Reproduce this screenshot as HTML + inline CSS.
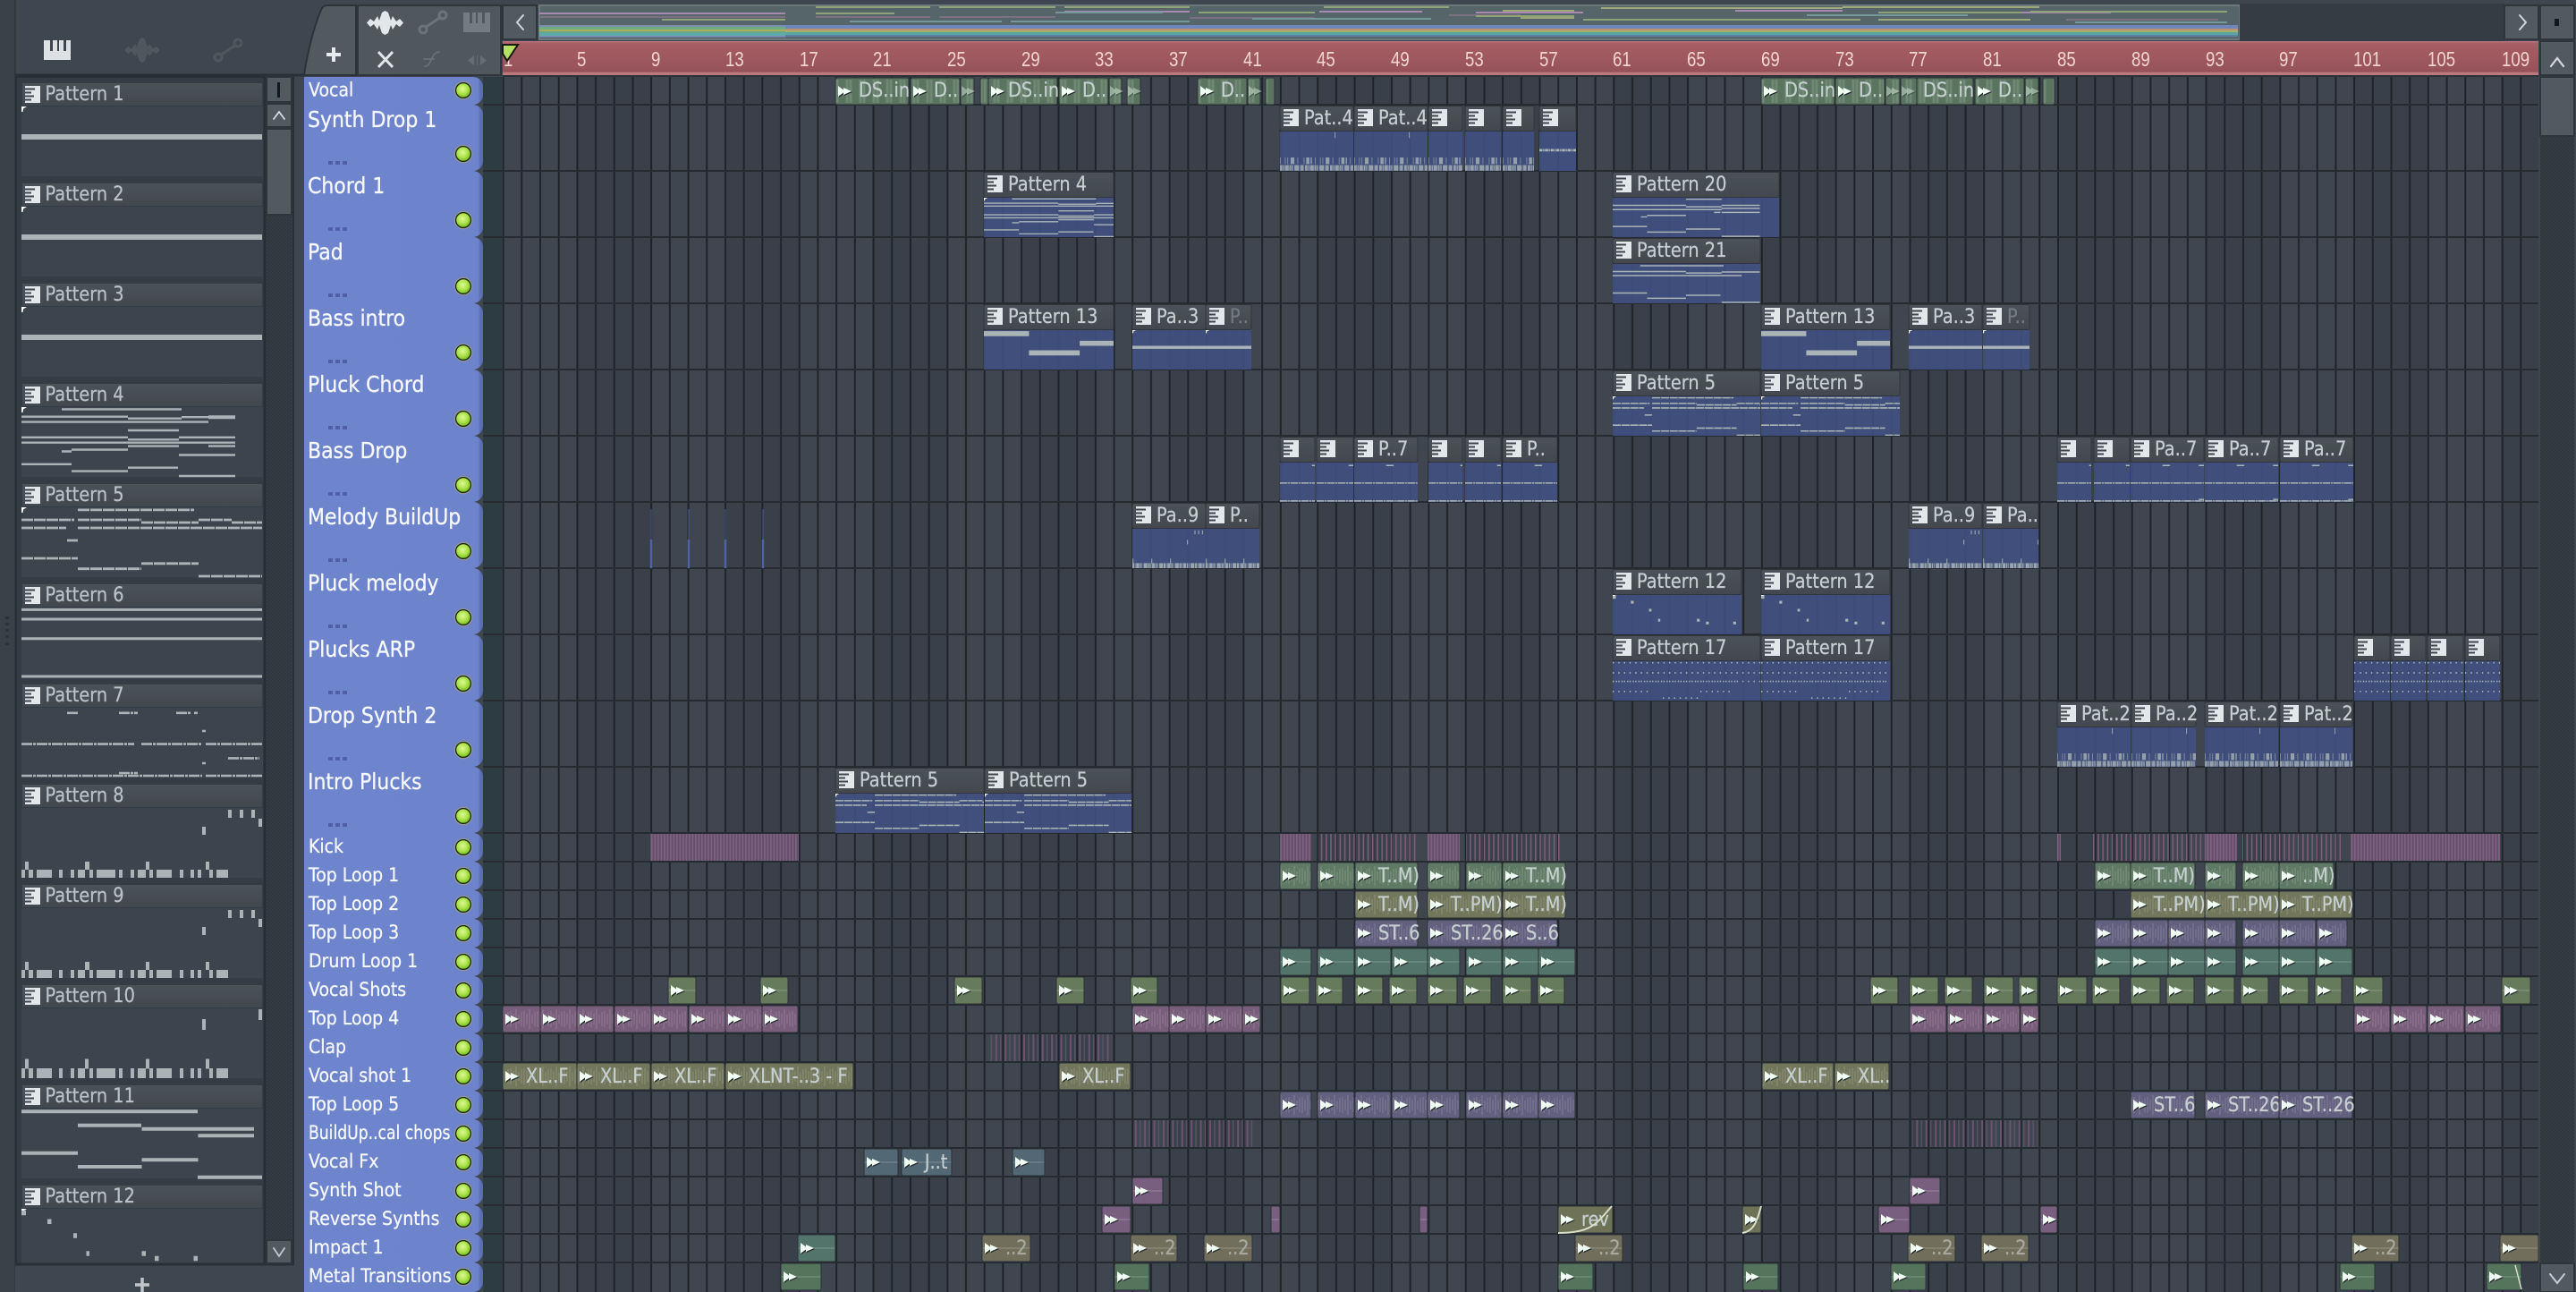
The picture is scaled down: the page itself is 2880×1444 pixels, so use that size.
<!DOCTYPE html>
<html><head><meta charset="utf-8"><title>Playlist</title>
<style>
html,body{margin:0;padding:0;background:#3e474f;overflow:hidden;width:2880px;height:1444px}
svg{display:block}
text{font-family:"DejaVu Sans",sans-serif;white-space:pre}
.ct,.tt,.ts,.lt{transform:scaleX(.88);transform-box:fill-box;transform-origin:0 50%}
.ct{font-size:22px;fill:#c6cfd0;stroke:#c6cfd0;stroke-width:.25px}
.lt{font-size:22px;fill:#b9c3c7;stroke:#b9c3c7;stroke-width:.25px}
.dm{fill:#737b80;stroke:#737b80}
.tt{font-size:25px;fill:#f6f8ff;stroke:#f6f8ff;stroke-width:.35px}
.ts{font-size:21.5px;fill:#f6f8ff;stroke:#f6f8ff;stroke-width:.3px}
.rl{font-family:"Liberation Sans",sans-serif;font-size:23px;fill:#f3d5d0;transform:scaleX(.81);transform-box:fill-box;transform-origin:0 50%}
.c{y:1px;height:30px;rx:2px;stroke:#2c3238;stroke-width:1}
.k{y:1px;height:30px}
.h{y:1.5px;height:28px;rx:2px;fill:url(#hg);stroke:#30363c;stroke-width:1}
.lh{x:25px;y:0;width:268px;height:25px;fill:url(#hg)}
.th{x:24px;y:26px;width:270px;height:78px;fill:#3c454e}
.b{width:500px;height:44px;fill:#40507f;opacity:.9}
.tk{x:320px;width:220px;rx:11px;fill:url(#tg)}
.btn{fill:#525a61;stroke:#2e353b;stroke-width:2}
.ic{fill:none;stroke-linecap:round}
.n{fill:none;stroke:#aab4b7}
</style></head><body>
<svg width="2880" height="1444" viewBox="0 0 2880 1444" xmlns="http://www.w3.org/2000/svg">
<defs>
<linearGradient id="hg" x1="0" y1="0" x2="0" y2="1"><stop offset="0" stop-color="#4b5259"/><stop offset="1" stop-color="#42484e"/></linearGradient>
<linearGradient id="tg" x1="0" y1="0" x2="1" y2="0"><stop offset="0" stop-color="#6e84cc"/><stop offset=".975" stop-color="#6d83cb"/><stop offset=".985" stop-color="#5d70b5"/><stop offset="1" stop-color="#5a6cb0"/></linearGradient>
<linearGradient id="rg" x1="0" y1="0" x2="0" y2="1"><stop offset="0" stop-color="#bb7a7e"/><stop offset=".07" stop-color="#a75e64"/><stop offset=".9" stop-color="#96525a"/><stop offset=".93" stop-color="#bd7c80"/><stop offset="1" stop-color="#b97478"/></linearGradient>
<radialGradient id="lg" cx=".45" cy=".4" r=".65"><stop offset="0" stop-color="#dcfa95"/><stop offset=".6" stop-color="#a8e045"/><stop offset="1" stop-color="#72b21e"/></radialGradient>
<pattern id="gr" x="561.6" y="0" width="165.56" height="32" patternUnits="userSpaceOnUse"><rect width="82.78" height="32" fill="#3f464f"/><rect x="82.78" width="82.78" height="32" fill="#39404a"/><path d="M1 0V32M21.7 0V32M42.4 0V32M63.1 0V32M83.8 0V32M104.5 0V32M125.2 0V32M145.9 0V32" stroke="#1e2329" stroke-width="2"/></pattern>
<pattern id="ht" width="4" height="4" patternUnits="userSpaceOnUse"><rect width="4" height="4" fill="#353c43"/><path d="M0 4L4 0" stroke="#2e353b"/></pattern>
<path id="wv" d="M1 7V25M4 10V22M7 5V27M10 11V21M13 8V24" stroke="#fff" stroke-opacity=".11" stroke-width="1.6"/>
<path id="wl" d="M0 16H15" stroke="#fff" stroke-opacity=".2" stroke-width="1.2"/>
<pattern id="pg" width="15" height="32" patternUnits="userSpaceOnUse"><rect width="15" height="32" fill="#5f7a64"/><use href="#wv"/></pattern>
<pattern id="pv" width="15" height="32" patternUnits="userSpaceOnUse"><rect width="15" height="32" fill="#5b7460"/><path d="M2 3V29M6 3V29" stroke="#6e8873" stroke-width="3"/></pattern>
<pattern id="po" width="15" height="32" patternUnits="userSpaceOnUse"><rect width="15" height="32" fill="#72775c"/><use href="#wv"/></pattern>
<pattern id="pp" width="15" height="32" patternUnits="userSpaceOnUse"><rect width="15" height="32" fill="#635f7e"/><use href="#wv"/></pattern>
<pattern id="pm" width="15" height="32" patternUnits="userSpaceOnUse"><rect width="15" height="32" fill="#785e7a"/><use href="#wv"/></pattern>
<pattern id="te" width="15" height="32" patternUnits="userSpaceOnUse"><rect width="15" height="32" fill="#52746a"/><use href="#wl"/></pattern>
<pattern id="vg" width="15" height="32" patternUnits="userSpaceOnUse"><rect width="15" height="32" fill="#667a5c"/><use href="#wl"/></pattern>
<pattern id="vb" width="15" height="32" patternUnits="userSpaceOnUse"><rect width="15" height="32" fill="#526874"/><use href="#wl"/></pattern>
<pattern id="br" width="15" height="32" patternUnits="userSpaceOnUse"><rect width="15" height="32" fill="#726e5c"/><use href="#wl"/></pattern>
<pattern id="mg" width="15" height="32" patternUnits="userSpaceOnUse"><rect width="15" height="32" fill="#54745c"/><use href="#wl"/></pattern>
<pattern id="ms" width="15" height="32" patternUnits="userSpaceOnUse"><rect width="15" height="32" fill="#785f80"/><use href="#wl"/></pattern>
<pattern id="kd" width="3.5" height="32" patternUnits="userSpaceOnUse"><rect width="3.5" height="32" fill="#62506a"/><rect width="1.7" height="32" fill="#7e6080"/></pattern>
<pattern id="ks" width="5.2" height="32" patternUnits="userSpaceOnUse"><rect width="1.6" height="32" fill="#7d5c7a"/></pattern>
<pattern id="cs" width="10.4" height="32" patternUnits="userSpaceOnUse"><rect width="2" height="32" fill="#6d5170"/><rect x="5.2" width="1.4" height="32" fill="#5a5568"/></pattern>
<g id="a"><path d="M4 11L10 15.5V13L19 17L10 21V18.5L4 23Z" fill="#23282c"/><path d="M3 10L9 14.5V12L18 16L9 20V17.5L3 22Z" fill="#f2fff4"/></g>
<g id="pi"><rect width="17" height="19" fill="#e2e7ea"/><path d="M0 3.500h11M0 7.500h7M0 11.500h10M0 15.500h7" stroke="#3f474e" stroke-width="2"/></g>
<g id="l"><circle cx="518" r="10.4" fill="#8d949a"/><circle cx="518" r="9" fill="#15240a"/><circle cx="518" r="7.800" fill="url(#lg)"/></g>
<path id="mk" d="M0 0h6L2 2.5 1.5 6H0z" fill="#fff"/>
<path id="dt" d="M367 0h5v4h-5zM375 0h5v4h-5zM383 0h5v4h-5z" fill="#4f60a8"/>
<g id="p1"><use href="#mk"/><path class="n" stroke-width="6" d="M0 34H269"/></g>
<g id="p4"><use href="#mk"/><path class="n" stroke-width="2.4" d="M45 2.4h134M0 10.7h119M0 16.6h209M119 12.7h60M179 11.2h30M0 33.8h119M176 33.8h63M119 26h57M119 36.3h57M0 39.7h239M119 43.6h57M209 43.6h30M56 47.6h63M45 49.5h11M176 53.5h63M0 63.8h56M119 67.7h56M56 71.6h63M176 77h63"/><path class="n" stroke-width="4" d="M209 11.2h30"/></g>
<g id="p20"><path class="n" stroke-width="2.6" d="M117 3h57M0 15h117M117 18h57M174 15h61M0 23.5h174M174 21h61M162 29h10M174 29h61M55 35h62M45 38h10M0 57h55M117 62h55M55 68h62M174 76.5h61"/></g>
<g id="p21"><path class="n" stroke-width="2.6" d="M44 3.6h133M0 15h117M117 18h57M174 16h61M0 23h206M0 57.6h55M117 62h55M55 68h62M174 76h61"/></g>
<g id="p5"><use href="#mk"/><path class="n" stroke-width="2.8" stroke-dasharray="13 1" d="M63 2.9h130M0 14h59M63 14h71M198 14h37M134 17h64M235 17h34M0 23h50M63 23h206M51 37h12M0 57h63M134 62.8h64M63 68.7h71M198 77h71"/></g>
<g id="p6"><path class="n" stroke-width="3" d="M0 2.4H269M0 13H269M0 34.8H269M0 77H269"/></g>
<g id="p7"><path class="n" stroke-width="2.6" stroke-dasharray="12 1 3 1" d="M51 5.8h12M109 5.8h21M173 5.8h16M193 5.8h4M202 26h4M0 40.6h126M134 40.6h68M206 40.6h63M231 56.4h35M202 62h4M109 73h21M0 76h202M206 76h63"/></g>
<g id="p8"><path class="n" stroke-width="9" d="M0 73.5h4M8 73.5h5M17 73.5h17M42 73.5h4M55 73.5h4M63 73.5h8M76 73.5h4M84 73.5h21M109 73.5h4M122 73.5h4M130 73.5h9M143 73.5h4M151 73.5h17M177 73.5h4M189 73.5h4M197 73.5h4M210 73.5h4M218 73.5h13M4 64.5h4M71 64.5h5M139 64.5h4M206 64.5h4M231 6.5h4M244 6.5h4M257 6.5h4M265 16.5h4M202 25.5h4"/></g>
<g id="p10"><path class="n" stroke-width="11" d="M0 72.5h4M8 72.5h5M17 72.5h17M42 72.5h4M55 72.5h4M63 72.5h8M76 72.5h4M84 72.5h21M109 72.5h4M122 72.5h4M130 72.5h9M143 72.5h4M151 72.5h17M177 72.5h4M189 72.5h4M197 72.5h4M210 72.5h4M218 72.5h13M4 62h4M71 62h4M139 62h4M206 62h4"/><path class="n" stroke-width="4" d="M267 1V13M204 12V24"/></g>
<g id="p11"><path class="n" stroke-width="4" d="M0 3.3h197M63 18.7h71M134.500 22.700h63M197.400 22.700h62.600M197.400 30.300h62.600M0 49.700h63M134.500 57.300h63M63 65h71.500M197 76.700h72"/></g>
<g id="p12"><use href="#mk"/><path class="n" stroke-width="5.500" d="M0 4.500h5M29 14.300h4.500M58 30h4M72.500 50h3.500M134.500 50h4.500M149 55.500h4.500M192.500 55.500h4.500M225 64h33M210 73h14"/></g>
<g id="p13"><path class="n" stroke-width="10" d="M0 7H72M72 45H153M153 26H226M226 73H269"/></g>
<g id="p14" opacity=".8"><path class="n" stroke-width="11" stroke-dasharray="4 1 2 1 6 1 3 1 2 2 7 1 1 1 5 2" d="M0 72H500"/><path class="n" stroke-width="13" stroke-dasharray="1 7 1 3 1 4 6 5 1 9 1 3 5 2 2 5" d="M0 58H500"/><path class="n" stroke-width="1.500" d="M88 1V13M206 1V13"/></g>
<g id="p15"><path class="n" stroke-width="5" stroke-dasharray="5 1 2 1" d="M0 37H60M85 71H95"/></g>
<g id="p9" opacity=".85"><path class="n" stroke-width="10" stroke-dasharray="3 1 1 1 5 1 2 1 1 2 6 1" d="M0 73H500"/><path class="n" stroke-width="1.600" d="M1 59V69M31 59V69M61 59V69M88 22V31M100 3V11M106 3V11M112 3V11M118 8V18M121 59V69M151 59V69M181 59V69"/></g>
<g id="p17"><path class="n" stroke-width="3" stroke-dasharray="2 7" d="M0 3H500M0 23H500M0 40H500M0 60H60M80 73H140M140 60H190M5 40H200"/></g>
<g id="B1"><rect class="b"/><use href="#p1" transform="scale(.7 .564)"/></g>
<g id="B4"><rect class="b"/><use href="#p4" transform="scale(.7 .564)"/></g>
<g id="B5"><rect class="b"/><use href="#p5" transform="scale(.7 .564)"/></g>
<g id="B7"><rect class="b"/><use href="#p7" transform="scale(.7 .564)"/></g>
<g id="B9"><rect class="b"/><use href="#p9" transform="scale(.7 .564)"/></g>
<g id="B12"><rect class="b"/><use href="#p12" transform="scale(.7 .564)"/></g>
<g id="B13"><rect class="b"/><use href="#p13" transform="scale(.7 .564)"/></g>
<g id="B14"><rect class="b"/><use href="#p14" transform="scale(.7 .564)"/></g>
<g id="B15"><rect class="b"/><use href="#p15" transform="scale(.7 .564)"/></g>
<g id="B17"><rect class="b"/><use href="#p17" transform="scale(.7 .564)"/></g>
<g id="B20"><rect class="b"/><use href="#p20" transform="scale(.7 .564)"/></g>
<g id="B21"><rect class="b"/><use href="#p21" transform="scale(.7 .564)"/></g>
</defs>

<rect width="2880" height="1444" fill="#3e474f"/>
<rect x="0" width="17" height="1444" fill="#3a4249"/>
<path d="M17 0V1444" stroke="#2e363d" stroke-width="1.500"/>
<path d="M6 689h4v3h-4zM6 696h4v3h-4zM6 703h4v3h-4zM6 710h4v3h-4zM6 718h4v3h-4z" fill="#2c3339"/>

<!-- grid -->
<rect x="562" y="86" width="2276" height="1358" fill="url(#gr)"/>
<rect x="540" y="86" width="22" height="1358" fill="#2d3b43"/>
<path d="M540 117H2838M540 191H2838M540 265H2838M540 339H2838M540 413H2838M540 487H2838M540 561H2838M540 635H2838M540 709H2838M540 783H2838M540 857H2838M540 931H2838M540 963H2838M540 995H2838M540 1027H2838M540 1059H2838M540 1091H2838M540 1123H2838M540 1155H2838M540 1187H2838M540 1219H2838M540 1251H2838M540 1283H2838M540 1315H2838M540 1347H2838M540 1379H2838M540 1411H2838" stroke="#262b32" stroke-width="2"/>

<!-- row 0 vocal -->
<g transform="translate(0 86)" fill="url(#pv)">
<rect class="c" x="934" width="82"/><use href="#a" x="934"/><text class="ct" x="960" y="22">DS..in</text>
<rect class="c" x="1018" width="55"/><use href="#a" x="1018"/><text class="ct" x="1044" y="22">D..</text>
<rect class="c" x="1074" width="15"/><use href="#a" x="1072" opacity=".4"/>
<rect class="c" x="1096" width="9"/>
<rect class="c" x="1105" width="77"/><use href="#a" x="1105"/><text class="ct" x="1127" y="22">DS..in</text>
<rect class="c" x="1184" width="55"/><use href="#a" x="1184"/><text class="ct" x="1210" y="22">D..</text>
<rect class="c" x="1240" width="14"/><use href="#a" x="1238" opacity=".4"/>
<rect class="c" x="1260" width="15"/><use href="#a" x="1258" opacity=".4"/>
<rect class="c" x="1339" width="55"/><use href="#a" x="1339"/><text class="ct" x="1365" y="22">D..</text>
<rect class="c" x="1395" width="14"/><use href="#a" x="1393" opacity=".4"/>
<rect class="c" x="1415" width="10"/>
<rect class="c" x="1969" width="82"/><use href="#a" x="1969"/><text class="ct" x="1995" y="22">DS..in</text>
<rect class="c" x="2052" width="55"/><use href="#a" x="2052"/><text class="ct" x="2078" y="22">D..</text>
<rect class="c" x="2108" width="16"/><use href="#a" x="2106" opacity=".4"/>
<rect class="c" x="2125" width="18"/><use href="#a" x="2123" opacity=".4"/>
<rect class="c" x="2143" width="63"/><text class="ct" x="2150" y="22">DS..in</text>
<rect class="c" x="2208" width="55"/><use href="#a" x="2208"/><text class="ct" x="2234" y="22">D..</text>
<rect class="c" x="2264" width="15"/><use href="#a" x="2262" opacity=".4"/>
<rect class="c" x="2284" width="13"/>
</g>

<!-- row 1 synth drop -->
<g transform="translate(0 117)">
<rect class="h" x="1431" width="82"/><use href="#pi" x="1435" y="5"/><text class="ct" x="1458" y="22">Pat..4</text><svg x="1431" y="30" width="82" height="44"><use href="#B14"/></svg>
<rect class="h" x="1514" width="82"/><use href="#pi" x="1518" y="5"/><text class="ct" x="1541" y="22">Pat..4</text><svg x="1514" y="30" width="82" height="44"><use href="#B14"/></svg>
<rect class="h" x="1597" width="38"/><use href="#pi" x="1601" y="5"/><svg x="1597" y="30" width="38" height="44"><use href="#B14"/></svg>
<rect class="h" x="1638" width="40"/><use href="#pi" x="1642" y="5"/><svg x="1638" y="30" width="40" height="44"><use href="#B14"/></svg>
<rect class="h" x="1680" width="35"/><use href="#pi" x="1684" y="5"/><svg x="1680" y="30" width="35" height="44"><use href="#B14"/></svg>
<rect class="h" x="1721" width="41"/><use href="#pi" x="1725" y="5"/><svg x="1721" y="30" width="41" height="44"><use href="#B15"/></svg>
</g>
<!-- row 2 chord -->
<g transform="translate(0 191)">
<rect class="h" x="1100" width="145"/><use href="#pi" x="1104" y="5"/><text class="ct" x="1127" y="22">Pattern 4</text><svg x="1100" y="30" width="145" height="44"><use href="#B4"/></svg>
<rect class="h" x="1803" width="186"/><use href="#pi" x="1807" y="5"/><text class="ct" x="1830" y="22">Pattern 20</text><svg x="1803" y="30" width="186" height="44"><use href="#B20"/></svg>
</g>
<!-- row 3 pad -->
<g transform="translate(0 265)">
<rect class="h" x="1803" width="165"/><use href="#pi" x="1807" y="5"/><text class="ct" x="1830" y="22">Pattern 21</text><svg x="1803" y="30" width="165" height="44"><use href="#B21"/></svg>
</g>
<!-- row 4 bass intro -->
<g transform="translate(0 339)">
<rect class="h" x="1100" width="145"/><use href="#pi" x="1104" y="5"/><text class="ct" x="1127" y="22">Pattern 13</text><svg x="1100" y="30" width="145" height="44"><use href="#B13"/></svg>
<rect class="h" x="1266" width="82"/><use href="#pi" x="1270" y="5"/><text class="ct" x="1293" y="22">Pa..3</text><svg x="1266" y="30" width="82" height="44"><use href="#B1"/></svg>
<rect class="h" x="1348" width="51"/><use href="#pi" x="1352" y="5"/><text class="ct dm" x="1375" y="22">P..</text><svg x="1348" y="30" width="51" height="44"><use href="#B1"/></svg>
<rect class="h" x="1969" width="144"/><use href="#pi" x="1973" y="5"/><text class="ct" x="1996" y="22">Pattern 13</text><svg x="1969" y="30" width="144" height="44"><use href="#B13"/></svg>
<rect class="h" x="2134" width="82"/><use href="#pi" x="2138" y="5"/><text class="ct" x="2161" y="22">Pa..3</text><svg x="2134" y="30" width="82" height="44"><use href="#B1"/></svg>
<rect class="h" x="2217" width="52"/><use href="#pi" x="2221" y="5"/><text class="ct dm" x="2244" y="22">P..</text><svg x="2217" y="30" width="52" height="44"><use href="#B1"/></svg>
</g>
<!-- row 5 pluck chord -->
<g transform="translate(0 413)">
<rect class="h" x="1803" width="165"/><use href="#pi" x="1807" y="5"/><text class="ct" x="1830" y="22">Pattern 5</text><svg x="1803" y="30" width="165" height="44"><use href="#B5"/></svg>
<rect class="h" x="1969" width="155"/><use href="#pi" x="1973" y="5"/><text class="ct" x="1996" y="22">Pattern 5</text><svg x="1969" y="30" width="155" height="44"><use href="#B5"/></svg>
</g>
<!-- row 6 bass drop -->
<g transform="translate(0 487)">
<rect class="h" x="1431" width="39"/><use href="#pi" x="1435" y="5"/><svg x="1431" y="30" width="39" height="44"><use href="#B7"/></svg>
<rect class="h" x="1472" width="41"/><use href="#pi" x="1476" y="5"/><svg x="1472" y="30" width="41" height="44"><use href="#B7"/></svg>
<rect class="h" x="1514" width="71"/><use href="#pi" x="1518" y="5"/><text class="ct" x="1541" y="22">P..7</text><svg x="1514" y="30" width="71" height="44"><use href="#B7"/></svg>
<rect class="h" x="1597" width="38"/><use href="#pi" x="1601" y="5"/><svg x="1597" y="30" width="38" height="44"><use href="#B7"/></svg>
<rect class="h" x="1638" width="40"/><use href="#pi" x="1642" y="5"/><svg x="1638" y="30" width="40" height="44"><use href="#B7"/></svg>
<rect class="h" x="1680" width="61"/><use href="#pi" x="1684" y="5"/><text class="ct" x="1707" y="22">P..</text><svg x="1680" y="30" width="61" height="44"><use href="#B7"/></svg>
<rect class="h" x="2300" width="38"/><use href="#pi" x="2304" y="5"/><svg x="2300" y="30" width="38" height="44"><use href="#B7"/></svg>
<rect class="h" x="2341" width="40"/><use href="#pi" x="2345" y="5"/><svg x="2341" y="30" width="40" height="44"><use href="#B7"/></svg>
<rect class="h" x="2382" width="82"/><use href="#pi" x="2386" y="5"/><text class="ct" x="2409" y="22">Pa..7</text><svg x="2382" y="30" width="82" height="44"><use href="#B7"/></svg>
<rect class="h" x="2465" width="82"/><use href="#pi" x="2469" y="5"/><text class="ct" x="2492" y="22">Pa..7</text><svg x="2465" y="30" width="82" height="44"><use href="#B7"/></svg>
<rect class="h" x="2549" width="82"/><use href="#pi" x="2553" y="5"/><text class="ct" x="2576" y="22">Pa..7</text><svg x="2549" y="30" width="82" height="44"><use href="#B7"/></svg>
</g>
<!-- row 7 melody -->
<g transform="translate(0 561)">
<path d="M728 74V8M770 74V8M811 74V8M853 74V8" stroke="#4e5f96" stroke-width="1"/>
<path d="M728 74V42M770 74V42M811 74V42M853 74V42" stroke="#4e63a0" stroke-width="2.500"/>
<rect class="h" x="1266" width="82"/><use href="#pi" x="1270" y="5"/><text class="ct" x="1293" y="22">Pa..9</text><svg x="1266" y="30" width="82" height="44"><use href="#B9"/></svg>
<rect class="h" x="1348" width="60"/><use href="#pi" x="1352" y="5"/><text class="ct" x="1375" y="22">P..</text><svg x="1348" y="30" width="60" height="44"><use href="#B9"/></svg>
<rect class="h" x="2134" width="82"/><use href="#pi" x="2138" y="5"/><text class="ct" x="2161" y="22">Pa..9</text><svg x="2134" y="30" width="82" height="44"><use href="#B9"/></svg>
<rect class="h" x="2217" width="62"/><use href="#pi" x="2221" y="5"/><text class="ct" x="2244" y="22">Pa..</text><svg x="2217" y="30" width="62" height="44"><use href="#B9"/></svg>
</g>
<!-- row 8 pluck melody -->
<g transform="translate(0 635)">
<rect class="h" x="1803" width="144"/><use href="#pi" x="1807" y="5"/><text class="ct" x="1830" y="22">Pattern 12</text><svg x="1803" y="30" width="144" height="44"><use href="#B12"/></svg>
<rect class="h" x="1969" width="144"/><use href="#pi" x="1973" y="5"/><text class="ct" x="1996" y="22">Pattern 12</text><svg x="1969" y="30" width="144" height="44"><use href="#B12"/></svg>
</g>
<!-- row 9 plucks arp -->
<g transform="translate(0 709)">
<rect class="h" x="1803" width="165"/><use href="#pi" x="1807" y="5"/><text class="ct" x="1830" y="22">Pattern 17</text><svg x="1803" y="30" width="165" height="44"><use href="#B17"/></svg>
<rect class="h" x="1969" width="144"/><use href="#pi" x="1973" y="5"/><text class="ct" x="1996" y="22">Pattern 17</text><svg x="1969" y="30" width="144" height="44"><use href="#B17"/></svg>
<rect class="h" x="2632" width="40"/><use href="#pi" x="2636" y="5"/><svg x="2632" y="30" width="40" height="44"><use href="#B17"/></svg>
<rect class="h" x="2673" width="39"/><use href="#pi" x="2677" y="5"/><svg x="2673" y="30" width="39" height="44"><use href="#B17"/></svg>
<rect class="h" x="2714" width="40"/><use href="#pi" x="2718" y="5"/><svg x="2714" y="30" width="40" height="44"><use href="#B17"/></svg>
<rect class="h" x="2756" width="39"/><use href="#pi" x="2760" y="5"/><svg x="2756" y="30" width="39" height="44"><use href="#B17"/></svg>
</g>
<!-- row 10 drop synth 2 -->
<g transform="translate(0 783)">
<rect class="h" x="2300" width="82"/><use href="#pi" x="2304" y="5"/><text class="ct" x="2327" y="22">Pat..2</text><svg x="2300" y="30" width="82" height="44"><use href="#B14"/></svg>
<rect class="h" x="2383" width="72"/><use href="#pi" x="2387" y="5"/><text class="ct" x="2410" y="22">Pa..2</text><svg x="2383" y="30" width="72" height="44"><use href="#B14"/></svg>
<rect class="h" x="2465" width="82"/><use href="#pi" x="2469" y="5"/><text class="ct" x="2492" y="22">Pat..2</text><svg x="2465" y="30" width="82" height="44"><use href="#B14"/></svg>
<rect class="h" x="2549" width="81"/><use href="#pi" x="2553" y="5"/><text class="ct" x="2576" y="22">Pat..2</text><svg x="2549" y="30" width="81" height="44"><use href="#B14"/></svg>
</g>
<!-- row 11 intro plucks -->
<g transform="translate(0 857)">
<rect class="h" x="934" width="166"/><use href="#pi" x="938" y="5"/><text class="ct" x="961" y="22">Pattern 5</text><svg x="934" y="30" width="166" height="44"><use href="#B5"/></svg>
<rect class="h" x="1101" width="164"/><use href="#pi" x="1105" y="5"/><text class="ct" x="1128" y="22">Pattern 5</text><svg x="1101" y="30" width="164" height="44"><use href="#B5"/></svg>
</g>
<!-- row 12 kick -->
<g transform="translate(0 931)">
<rect class="k" x="727" width="166" fill="url(#kd)"/><rect class="k" x="1431" width="35" fill="url(#kd)"/><rect class="k" x="1473" width="110" fill="url(#ks)"/><rect class="k" x="1596" width="36" fill="url(#kd)"/><rect class="k" x="1639" width="105" fill="url(#ks)"/><rect class="k" x="2300" width="4" fill="url(#kd)"/><rect class="k" x="2338" width="127" fill="url(#ks)"/><rect class="k" x="2465" width="36" fill="url(#kd)"/><rect class="k" x="2507" width="110" fill="url(#ks)"/><rect class="k" x="2628" width="167" fill="url(#kd)"/>
</g>
<!-- row 13 TL1 -->
<g transform="translate(0 963)" fill="url(#pg)">
<rect class="c" x="1431" width="35"/><use href="#a" x="1431"/>
<rect class="c" x="1473" width="41"/><use href="#a" x="1473"/>
<rect class="c" x="1515" width="70"/><use href="#a" x="1515"/><text class="ct" x="1541" y="23">T..M)</text>
<rect class="c" x="1596" width="36"/><use href="#a" x="1596"/>
<rect class="c" x="1639" width="40"/><use href="#a" x="1639"/>
<rect class="c" x="1680" width="70"/><use href="#a" x="1680"/><text class="ct" x="1706" y="23">T..M)</text>
<rect class="c" x="2342" width="40"/><use href="#a" x="2342"/>
<rect class="c" x="2382" width="72"/><use href="#a" x="2382"/><text class="ct" x="2408" y="23">T..M)</text>
<rect class="c" x="2465" width="35"/><use href="#a" x="2465"/>
<rect class="c" x="2507" width="41"/><use href="#a" x="2507"/>
<rect class="c" x="2548" width="61"/><use href="#a" x="2548"/><text class="ct" x="2574" y="23">..M)</text>
</g>
<!-- row 14 TL2 -->
<g transform="translate(0 995)" fill="url(#po)">
<rect class="c" x="1515" width="70"/><use href="#a" x="1515"/><text class="ct" x="1541" y="23">T..M)</text>
<rect class="c" x="1596" width="83"/><use href="#a" x="1596"/><text class="ct" x="1622" y="23">T..PM)</text>
<rect class="c" x="1680" width="70"/><use href="#a" x="1680"/><text class="ct" x="1706" y="23">T..M)</text>
<rect class="c" x="2382" width="83"/><use href="#a" x="2382"/><text class="ct" x="2408" y="23">T..PM)</text>
<rect class="c" x="2465" width="83"/><use href="#a" x="2465"/><text class="ct" x="2491" y="23">T..PM)</text>
<rect class="c" x="2548" width="82"/><use href="#a" x="2548"/><text class="ct" x="2574" y="23">T..PM)</text>
</g>
<!-- row 15 TL3 -->
<g transform="translate(0 1027)" fill="url(#pp)">
<rect class="c" x="1515" width="70"/><use href="#a" x="1515"/><text class="ct" x="1541" y="23">ST..6</text>
<rect class="c" x="1596" width="83"/><use href="#a" x="1596"/><text class="ct" x="1622" y="23">ST..26</text>
<rect class="c" x="1680" width="61"/><use href="#a" x="1680"/><text class="ct" x="1706" y="23">S..6</text>
<rect class="c" x="2342" width="40"/><use href="#a" x="2342"/>
<rect class="c" x="2382" width="42"/><use href="#a" x="2382"/>
<rect class="c" x="2424" width="41"/><use href="#a" x="2424"/>
<rect class="c" x="2465" width="35"/><use href="#a" x="2465"/>
<rect class="c" x="2507" width="41"/><use href="#a" x="2507"/>
<rect class="c" x="2548" width="41"/><use href="#a" x="2548"/>
<rect class="c" x="2590" width="34"/><use href="#a" x="2590"/>
</g>
<!-- row 16 DL1 -->
<g transform="translate(0 1059)" fill="url(#te)">
<rect class="c" x="1431" width="35"/><use href="#a" x="1431"/>
<rect class="c" x="1473" width="41"/><use href="#a" x="1473"/>
<rect class="c" x="1515" width="40"/><use href="#a" x="1515"/>
<rect class="c" x="1556" width="40"/><use href="#a" x="1556"/>
<rect class="c" x="1596" width="36"/><use href="#a" x="1596"/>
<rect class="c" x="1639" width="40"/><use href="#a" x="1639"/>
<rect class="c" x="1680" width="40"/><use href="#a" x="1680"/>
<rect class="c" x="1720" width="41"/><use href="#a" x="1720"/>
<rect class="c" x="2342" width="40"/><use href="#a" x="2342"/>
<rect class="c" x="2382" width="42"/><use href="#a" x="2382"/>
<rect class="c" x="2424" width="41"/><use href="#a" x="2424"/>
<rect class="c" x="2465" width="35"/><use href="#a" x="2465"/>
<rect class="c" x="2507" width="41"/><use href="#a" x="2507"/>
<rect class="c" x="2548" width="41"/><use href="#a" x="2548"/>
<rect class="c" x="2590" width="40"/><use href="#a" x="2590"/>
</g>
<!-- row 17 vocal shots -->
<g transform="translate(0 1091)" fill="url(#vg)">
<rect class="c" x="747" width="31"/><use href="#a" x="747"/>
<rect class="c" x="850" width="31"/><use href="#a" x="850"/>
<rect class="c" x="1067" width="31"/><use href="#a" x="1067"/>
<rect class="c" x="1181" width="31"/><use href="#a" x="1181"/>
<rect class="c" x="1264" width="30"/><use href="#a" x="1264"/>
<rect class="c" x="1432" width="32"/><use href="#a" x="1432"/>
<rect class="c" x="1471" width="30"/><use href="#a" x="1471"/>
<rect class="c" x="1515" width="31"/><use href="#a" x="1515"/>
<rect class="c" x="1553" width="31"/><use href="#a" x="1553"/>
<rect class="c" x="1596" width="33"/><use href="#a" x="1596"/>
<rect class="c" x="1636" width="31"/><use href="#a" x="1636"/>
<rect class="c" x="1680" width="32"/><use href="#a" x="1680"/>
<rect class="c" x="1719" width="30"/><use href="#a" x="1719"/>
<rect class="c" x="2091" width="31"/><use href="#a" x="2091"/>
<rect class="c" x="2135" width="32"/><use href="#a" x="2135"/>
<rect class="c" x="2174" width="31"/><use href="#a" x="2174"/>
<rect class="c" x="2218" width="33"/><use href="#a" x="2218"/>
<rect class="c" x="2257" width="21"/><use href="#a" x="2257"/>
<rect class="c" x="2300" width="33"/><use href="#a" x="2300"/>
<rect class="c" x="2339" width="31"/><use href="#a" x="2339"/>
<rect class="c" x="2382" width="33"/><use href="#a" x="2382"/>
<rect class="c" x="2422" width="31"/><use href="#a" x="2422"/>
<rect class="c" x="2465" width="33"/><use href="#a" x="2465"/>
<rect class="c" x="2505" width="31"/><use href="#a" x="2505"/>
<rect class="c" x="2548" width="33"/><use href="#a" x="2548"/>
<rect class="c" x="2588" width="30"/><use href="#a" x="2588"/>
<rect class="c" x="2631" width="33"/><use href="#a" x="2631"/>
<rect class="c" x="2797" width="32"/><use href="#a" x="2797"/>
</g>
<!-- row 18 TL4 -->
<g transform="translate(0 1123)" fill="url(#pm)">
<rect class="c" x="562" width="42"/><use href="#a" x="562"/>
<rect class="c" x="604" width="41"/><use href="#a" x="604"/>
<rect class="c" x="645" width="41"/><use href="#a" x="645"/>
<rect class="c" x="687" width="41"/><use href="#a" x="687"/>
<rect class="c" x="728" width="41"/><use href="#a" x="728"/>
<rect class="c" x="770" width="41"/><use href="#a" x="770"/>
<rect class="c" x="811" width="41"/><use href="#a" x="811"/>
<rect class="c" x="852" width="40"/><use href="#a" x="852"/>
<rect class="c" x="1266" width="41"/><use href="#a" x="1266"/>
<rect class="c" x="1307" width="41"/><use href="#a" x="1307"/>
<rect class="c" x="1348" width="41"/><use href="#a" x="1348"/>
<rect class="c" x="1389" width="20"/><use href="#a" x="1389"/>
<rect class="c" x="2135" width="41"/><use href="#a" x="2135"/>
<rect class="c" x="2177" width="40"/><use href="#a" x="2177"/>
<rect class="c" x="2218" width="40"/><use href="#a" x="2218"/>
<rect class="c" x="2259" width="20"/><use href="#a" x="2259"/>
<rect class="c" x="2632" width="40"/><use href="#a" x="2632"/>
<rect class="c" x="2673" width="40"/><use href="#a" x="2673"/>
<rect class="c" x="2714" width="41"/><use href="#a" x="2714"/>
<rect class="c" x="2756" width="40"/><use href="#a" x="2756"/>
</g>
<!-- row 19 clap -->
<g transform="translate(0 1155)"><rect class="k" x="1105" width="138" fill="url(#cs)"/></g>
<!-- row 20 vocal shot 1 -->
<g transform="translate(0 1187)" fill="url(#po)">
<rect class="c" x="562" width="83"/><use href="#a" x="562"/><text class="ct" x="588" y="23">XL..F</text>
<rect class="c" x="645" width="82"/><use href="#a" x="645"/><text class="ct" x="671" y="23">XL..F</text>
<rect class="c" x="728" width="82"/><use href="#a" x="728"/><text class="ct" x="754" y="23">XL..F</text>
<rect class="c" x="811" width="143"/><use href="#a" x="811"/><text class="ct" x="837" y="23">XLNT-..3 - F</text>
<rect class="c" x="1184" width="80"/><use href="#a" x="1184"/><text class="ct" x="1210" y="23">XL..F</text>
<rect class="c" x="1970" width="80"/><use href="#a" x="1970"/><text class="ct" x="1996" y="23">XL..F</text>
<rect class="c" x="2051" width="61"/><use href="#a" x="2051"/><text class="ct" x="2077" y="23">XL..</text>
</g>
<!-- row 21 TL5 -->
<g transform="translate(0 1219)" fill="url(#pp)">
<rect class="c" x="1431" width="35"/><use href="#a" x="1431"/>
<rect class="c" x="1473" width="41"/><use href="#a" x="1473"/>
<rect class="c" x="1515" width="40"/><use href="#a" x="1515"/>
<rect class="c" x="1556" width="40"/><use href="#a" x="1556"/>
<rect class="c" x="1596" width="36"/><use href="#a" x="1596"/>
<rect class="c" x="1639" width="40"/><use href="#a" x="1639"/>
<rect class="c" x="1680" width="40"/><use href="#a" x="1680"/>
<rect class="c" x="1720" width="41"/><use href="#a" x="1720"/>
<rect class="c" x="2382" width="72"/><use href="#a" x="2382"/><text class="ct" x="2408" y="23">ST..6</text>
<rect class="c" x="2465" width="83"/><use href="#a" x="2465"/><text class="ct" x="2491" y="23">ST..26</text>
<rect class="c" x="2548" width="82"/><use href="#a" x="2548"/><text class="ct" x="2574" y="23">ST..26</text>
</g>
<!-- row 22 buildup -->
<g transform="translate(0 1251)"><rect class="k" x="1268" width="133" fill="url(#cs)"/><rect class="k" x="2138" width="140" fill="url(#cs)"/></g>
<!-- row 23 vocal fx -->
<g transform="translate(0 1283)" fill="url(#vb)">
<rect class="c" x="966" width="38"/><use href="#a" x="966"/>
<rect class="c" x="1008" width="56"/><use href="#a" x="1008"/><text class="ct" x="1034" y="23">J..t</text>
<rect class="c" x="1132" width="36"/><use href="#a" x="1132"/>
</g>
<!-- row 24 synth shot -->
<g transform="translate(0 1315)" fill="url(#ms)">
<rect class="c" x="1266" width="34"/><use href="#a" x="1266"/>
<rect class="c" x="2135" width="34"/><use href="#a" x="2135"/>
</g>
<!-- row 25 reverse synths -->
<g transform="translate(0 1347)" fill="url(#ms)">
<rect class="c" x="1232" width="32"/><use href="#a" x="1232"/>
<rect class="c" x="1421" width="10"/>
<rect class="c" x="1587" width="9"/>
<rect class="c" x="1742" width="61" fill="#6e7358"/><use href="#a" x="1742"/><text class="ct" x="1768" y="23">rev</text><path d="M1742 31C1778 31 1784 22 1802 1" fill="none" stroke="#d8dcc8" stroke-width="2"/>
<rect class="c" x="1948" width="21" fill="#6e7358"/><use href="#a" x="1948"/><path d="M1948 31C1960 29 1964 20 1969 1" fill="none" stroke="#d8dcc8" stroke-width="2"/>
<rect class="c" x="2100" width="35"/><use href="#a" x="2100"/>
<rect class="c" x="2281" width="19"/><use href="#a" x="2281"/>
</g>
<!-- row 26 impact -->
<g transform="translate(0 1379)" fill="url(#br)">
<rect class="c" x="892" width="42" fill="url(#te)"/><use href="#a" x="892"/>
<rect class="c" x="1098" width="54"/><use href="#a" x="1098"/><text class="ct" x="1124" y="23" style="fill:#a6aaa0;stroke:#a6aaa0">..2</text>
<rect class="c" x="1264" width="52"/><use href="#a" x="1264"/><text class="ct" x="1290" y="23" style="fill:#a6aaa0;stroke:#a6aaa0">..2</text>
<rect class="c" x="1346" width="54"/><use href="#a" x="1346"/><text class="ct" x="1372" y="23" style="fill:#a6aaa0;stroke:#a6aaa0">..2</text>
<rect class="c" x="1761" width="53"/><use href="#a" x="1761"/><text class="ct" x="1787" y="23" style="fill:#a6aaa0;stroke:#a6aaa0">..2</text>
<rect class="c" x="2133" width="53"/><use href="#a" x="2133"/><text class="ct" x="2159" y="23" style="fill:#a6aaa0;stroke:#a6aaa0">..2</text>
<rect class="c" x="2215" width="53"/><use href="#a" x="2215"/><text class="ct" x="2241" y="23" style="fill:#a6aaa0;stroke:#a6aaa0">..2</text>
<rect class="c" x="2629" width="53"/><use href="#a" x="2629"/><text class="ct" x="2655" y="23" style="fill:#a6aaa0;stroke:#a6aaa0">..2</text>
<rect class="c" x="2795" width="43"/><use href="#a" x="2795"/>
</g>
<!-- row 27 metal -->
<g transform="translate(0 1411)" fill="url(#mg)">
<rect class="c" x="873" width="45"/><use href="#a" x="873"/>
<rect class="c" x="1246" width="39"/><use href="#a" x="1246"/>
<rect class="c" x="1742" width="39"/><use href="#a" x="1742"/>
<rect class="c" x="1949" width="39"/><use href="#a" x="1949"/>
<rect class="c" x="2114" width="39"/><use href="#a" x="2114"/>
<rect class="c" x="2616" width="39"/><use href="#a" x="2616"/>
<rect class="c" x="2780" width="39"/><use href="#a" x="2780"/><path d="M2812 3L2819 30" stroke="#d5dccb" stroke-width="1.500"/>
</g>

<!-- tracks -->
<rect class="tk" y="86" height="31"/><rect class="tk" y="117" height="74"/><rect class="tk" y="191" height="74"/><rect class="tk" y="265" height="74"/><rect class="tk" y="339" height="74"/><rect class="tk" y="413" height="74"/><rect class="tk" y="487" height="74"/><rect class="tk" y="561" height="74"/><rect class="tk" y="635" height="74"/><rect class="tk" y="709" height="74"/><rect class="tk" y="783" height="74"/><rect class="tk" y="857" height="74"/>
<rect class="tk" y="931" height="32"/><rect class="tk" y="963" height="32"/><rect class="tk" y="995" height="32"/><rect class="tk" y="1027" height="32"/><rect class="tk" y="1059" height="32"/><rect class="tk" y="1091" height="32"/><rect class="tk" y="1123" height="32"/><rect class="tk" y="1155" height="32"/><rect class="tk" y="1187" height="32"/><rect class="tk" y="1219" height="32"/><rect class="tk" y="1251" height="32"/><rect class="tk" y="1283" height="32"/><rect class="tk" y="1315" height="32"/><rect class="tk" y="1347" height="32"/><rect class="tk" y="1379" height="32"/><rect class="tk" y="1411" height="33"/>
<rect x="296" y="84" width="44" height="1360" fill="#3e474f"/>

<text class="ts" x="345" y="107.500">Vocal</text>
<text class="tt" x="344" y="142">Synth Drop 1</text><text class="tt" x="344" y="216">Chord 1</text><text class="tt" x="344" y="290">Pad</text><text class="tt" x="344" y="364">Bass intro</text><text class="tt" x="344" y="438">Pluck Chord</text><text class="tt" x="344" y="512">Bass Drop</text><text class="tt" x="344" y="586">Melody BuildUp</text><text class="tt" x="344" y="660">Pluck melody</text><text class="tt" x="344" y="734">Plucks ARP</text><text class="tt" x="344" y="808">Drop Synth 2</text><text class="tt" x="344" y="882">Intro Plucks</text>
<text class="ts" x="345" y="953">Kick</text><text class="ts" x="345" y="985">Top Loop 1</text><text class="ts" x="345" y="1017">Top Loop 2</text><text class="ts" x="345" y="1049">Top Loop 3</text><text class="ts" x="345" y="1081">Drum Loop 1</text><text class="ts" x="345" y="1113">Vocal Shots</text><text class="ts" x="345" y="1145">Top Loop 4</text><text class="ts" x="345" y="1177">Clap</text><text class="ts" x="345" y="1209">Vocal shot 1</text><text class="ts" x="345" y="1241">Top Loop 5</text><text class="ts" x="345" y="1273" style="transform:scaleX(.8)">BuildUp..cal chops</text><text class="ts" x="345" y="1305">Vocal Fx</text><text class="ts" x="345" y="1337">Synth Shot</text><text class="ts" x="345" y="1369">Reverse Synths</text><text class="ts" x="345" y="1401">Impact 1</text><text class="ts" x="345" y="1433">Metal Transitions</text>

<use href="#dt" y="180"/><use href="#dt" y="254"/><use href="#dt" y="328"/><use href="#dt" y="402"/><use href="#dt" y="476"/><use href="#dt" y="550"/><use href="#dt" y="624"/><use href="#dt" y="698"/><use href="#dt" y="772"/><use href="#dt" y="846"/><use href="#dt" y="920"/>

<use href="#l" y="101"/><use href="#l" y="172"/><use href="#l" y="246"/><use href="#l" y="320"/><use href="#l" y="394"/><use href="#l" y="468"/><use href="#l" y="542"/><use href="#l" y="616"/><use href="#l" y="690"/><use href="#l" y="764"/><use href="#l" y="838"/><use href="#l" y="912"/>
<use href="#l" y="947"/><use href="#l" y="979"/><use href="#l" y="1011"/><use href="#l" y="1043"/><use href="#l" y="1075"/><use href="#l" y="1107"/><use href="#l" y="1139"/><use href="#l" y="1171"/><use href="#l" y="1203"/><use href="#l" y="1235"/><use href="#l" y="1267"/><use href="#l" y="1299"/><use href="#l" y="1331"/><use href="#l" y="1363"/><use href="#l" y="1395"/><use href="#l" y="1427"/>

<!-- left panel -->
<rect x="17" y="84" width="311" height="1329" fill="#343d45"/>
<rect x="17" y="84" width="311" height="3" fill="#283037"/>
<path d="M18 84V1413H328V84" fill="none" stroke="#273037" stroke-width="2"/>
<path d="M296 84V1413" stroke="#283037" stroke-width="3"/>
<g transform="translate(0 93)"><rect class="lh"/><use href="#pi" x="28" y="3"/><text class="lt" x="50.500" y="19">Pattern 1</text><rect class="th"/><use href="#p1" x="24" y="26"/></g>
<g transform="translate(0 205)"><rect class="lh"/><use href="#pi" x="28" y="3"/><text class="lt" x="50.500" y="19">Pattern 2</text><rect class="th"/><use href="#p1" x="24" y="26"/></g>
<g transform="translate(0 317)"><rect class="lh"/><use href="#pi" x="28" y="3"/><text class="lt" x="50.500" y="19">Pattern 3</text><rect class="th"/><use href="#p1" x="24" y="26"/></g>
<g transform="translate(0 429)"><rect class="lh"/><use href="#pi" x="28" y="3"/><text class="lt" x="50.500" y="19">Pattern 4</text><rect class="th"/><use href="#p4" x="24" y="26"/></g>
<g transform="translate(0 541)"><rect class="lh"/><use href="#pi" x="28" y="3"/><text class="lt" x="50.500" y="19">Pattern 5</text><rect class="th"/><use href="#p5" x="24" y="26"/></g>
<g transform="translate(0 653)"><rect class="lh"/><use href="#pi" x="28" y="3"/><text class="lt" x="50.500" y="19">Pattern 6</text><rect class="th"/><use href="#p6" x="24" y="26"/></g>
<g transform="translate(0 765)"><rect class="lh"/><use href="#pi" x="28" y="3"/><text class="lt" x="50.500" y="19">Pattern 7</text><rect class="th"/><use href="#p7" x="24" y="26"/></g>
<g transform="translate(0 877)"><rect class="lh"/><use href="#pi" x="28" y="3"/><text class="lt" x="50.500" y="19">Pattern 8</text><rect class="th"/><use href="#p8" x="24" y="26"/></g>
<g transform="translate(0 989)"><rect class="lh"/><use href="#pi" x="28" y="3"/><text class="lt" x="50.500" y="19">Pattern 9</text><rect class="th"/><use href="#p8" x="24" y="26"/></g>
<g transform="translate(0 1101)"><rect class="lh"/><use href="#pi" x="28" y="3"/><text class="lt" x="50.500" y="19">Pattern 10</text><rect class="th"/><use href="#p10" x="24" y="26"/></g>
<g transform="translate(0 1213)"><rect class="lh"/><use href="#pi" x="28" y="3"/><text class="lt" x="50.500" y="19">Pattern 11</text><rect class="th"/><use href="#p11" x="24" y="26"/></g>
<g transform="translate(0 1325)"><rect class="lh"/><use href="#pi" x="28" y="3"/><text class="lt" x="50.500" y="19">Pattern 12</text><rect class="th"/><use href="#p12" x="24" y="26"/></g>
<rect x="17" y="1412" width="311" height="32" fill="#3e474f"/>
<path d="M17 1413H328" stroke="#273037" stroke-width="3"/>
<path d="M159 1428V1444M151 1436H167" stroke="#bfc5c8" stroke-width="3.500"/>
<!-- left scrollbar -->
<rect x="298" y="240" width="28" height="1146" fill="url(#ht)"/>
<rect class="btn" x="298" y="86" width="28" height="28"/><path d="M311.500 92V109" stroke="#15191d" stroke-width="3"/>
<rect class="btn" x="298" y="116" width="28" height="26"/><path class="ic" d="M306 133L312 125L318 133" stroke="#d6dadc" stroke-width="1.800"/>
<rect class="btn" x="298" y="144" width="28" height="96"/>
<rect class="btn" x="298" y="1386" width="28" height="26"/><path class="ic" d="M306 1395L312 1404L318 1395" stroke="#c3c8ca" stroke-width="1.800"/>

<!-- top left tools -->
<rect x="17" y="0" width="323" height="84" fill="#3e474f"/>
<path d="M17 0V84" stroke="#2e363d" stroke-width="1.500"/>
<path d="M17 84H340" stroke="#283037" stroke-width="3"/>
<path fill-rule="evenodd" fill="#dde1e3" d="M49 45H79V67H49ZM56 45V57H59V45ZM64 45V57H66V45ZM71 45V57H74V45Z"/>
<path fill="#50585f" transform="translate(139 42)" d="M0 14L4 10L8 12.500L12 7L14 11L17 2L20 0L23 2L26 11L28 7L32 12.500L36 10L40 14L36 18L32 15.500L28 21L26 17L23 26L20 28L17 26L14 17L12 21L8 15.500L4 18Z"/>
<g class="ic" stroke="#50585f" stroke-width="3"><circle cx="244" cy="64" r="4"/><circle cx="266" cy="48" r="4"/><path d="M247.500 61L262.500 51"/></g>

<!-- tab and tools -->
<rect x="340" y="0" width="2540" height="46" fill="#3e474f"/>
<rect x="340" y="46" width="222" height="40" fill="#3e474f"/>
<path d="M340 84C343 62 351 28 360 9Q362 6 366 6H398V84Z" fill="#525a60" stroke="#2b3238" stroke-width="2"/>
<path d="M373 53V69M365 61H381" stroke="#e8ebec" stroke-width="4"/>
<rect x="400" y="6" width="160" height="78" fill="#50585e" stroke="#2e353b" stroke-width="2"/>
<path fill="#e3e7e9" transform="translate(410 12)" d="M0 13.500L4 9L8 12L12 6L14 11L17 2L20.500 0L24 2L27 11L29 6L33 12L37 9L41 13.500L37 18L33 15L29 21L27 16L24 25L20.500 27L17 25L14 16L12 21L8 15L4 18Z"/>
<g class="ic" stroke="#6c747a" stroke-width="3"><circle cx="473" cy="33" r="4"/><circle cx="495" cy="17" r="4"/><path d="M476.500 30L491.500 20"/></g>
<path fill-rule="evenodd" fill="#747c81" d="M518 14H548V36H518ZM525 14V26H528V14ZM532 14V26H534V14ZM539 14V26H542V14Z"/>
<path d="M423 58L439 75M439 58L423 75" stroke="#e2e6e8" stroke-width="3"/>
<path class="ic" stroke="#666e74" stroke-width="2" d="M475 74C483 74 481 59 491 58M474 66H485"/>
<path fill="#666e74" d="M523 67.500l7-5.500v11zM544 67.500l-7-5.500v11z"/><path d="M533.500 62V73" stroke="#666e74"/>

<!-- overview -->
<rect x="562" y="6" width="38" height="38" class="btn"/><path class="ic" stroke="#d0d5d8" stroke-width="2" d="M585 17L578 25L585 33"/>
<rect x="603" y="6" width="1901" height="38" fill="#55656a"/>
<path d="M603 6H2504V44H603Z" fill="none" stroke="#6b787c" stroke-width="2"/>
<path fill="none" stroke-width="2" stroke="#a88ab0" d="M603 15H878M1190 13H1330M1475 13H1590M1650 14H1770M1940 12H2060M2150 14H2360"/>
<path fill="none" stroke-width="2" stroke="#7d7082" d="M603 19H878M912 19H1040M1050 19H1180M1330 20H1470M1620 17H1700M2310 22H2480"/>
<path fill="none" stroke-width="2" stroke="#8fa278" d="M740 22H878M912 8H1040M1050 8H1180M912 15H1000M1190 8H1330M1340 14H1470M1480 8H1620M1650 18H1760M1770 22H1960M1960 22H2080M2100 14H2260M2270 13H2490"/>
<path fill="none" stroke-width="2" stroke="#74989a" d="M950 24H1120M1130 24H1330M1180 14H1300M1400 21H1600M2020 17H2200M2320 25H2490"/>
<path fill="none" stroke-width="2" stroke="#9ea77a" d="M1700 20H1760M1680 12H1760M1790 9H2060M2100 22H2270M2060 8H2280"/>
<rect x="603" y="28" width="275" height="2" fill="#7a8fb0"/><rect x="603" y="30" width="275" height="3" fill="#6fae7f"/><rect x="603" y="33" width="275" height="2" fill="#a9ad5f"/><rect x="603" y="35" width="275" height="2" fill="#6aa88a"/><rect x="603" y="37" width="275" height="3" fill="#5fa9a8"/><rect x="603" y="40" width="275" height="1.500" fill="#7d8fc0"/>
<rect x="878" y="28" width="1624" height="4" fill="#6f87b8"/><rect x="878" y="32" width="1624" height="2" fill="#c09070"/><rect x="878" y="34" width="1624" height="2" fill="#9fb26e"/><rect x="878" y="36" width="1624" height="3" fill="#5aa5a0"/><rect x="878" y="39" width="1624" height="2" fill="#5f7fa5"/>
<rect x="2504" y="4" width="296" height="42" fill="#353c44"/>
<rect x="2800" y="6" width="38" height="38" class="btn"/><path class="ic" stroke="#d0d5d8" stroke-width="2" d="M2817 17L2824 25L2817 33"/>
<rect x="2840" y="6" width="38" height="38" class="btn"/><rect x="2856" y="21" width="5" height="8" fill="#14181b"/>

<!-- ruler -->
<rect x="562" y="46" width="2276" height="38" fill="url(#rg)"/>
<rect x="562" y="84" width="2276" height="2" fill="#2a3037"/>
<text class="rl" x="563" y="74">1</text><text class="rl" x="645" y="74">5</text><text class="rl" x="728" y="74">9</text><text class="rl" x="811" y="74">13</text><text class="rl" x="894" y="74">17</text><text class="rl" x="976" y="74">21</text><text class="rl" x="1059" y="74">25</text><text class="rl" x="1142" y="74">29</text><text class="rl" x="1224" y="74">33</text><text class="rl" x="1307" y="74">37</text><text class="rl" x="1390" y="74">41</text><text class="rl" x="1472" y="74">45</text><text class="rl" x="1555" y="74">49</text><text class="rl" x="1638" y="74">53</text><text class="rl" x="1721" y="74">57</text><text class="rl" x="1803" y="74">61</text><text class="rl" x="1886" y="74">65</text><text class="rl" x="1969" y="74">69</text><text class="rl" x="2052" y="74">73</text><text class="rl" x="2134" y="74">77</text><text class="rl" x="2217" y="74">81</text><text class="rl" x="2300" y="74">85</text><text class="rl" x="2383" y="74">89</text><text class="rl" x="2466" y="74">93</text><text class="rl" x="2548" y="74">97</text><text class="rl" x="2631" y="74">101</text><text class="rl" x="2714" y="74">105</text><text class="rl" x="2797" y="74">109</text>
<path d="M562 50H579L567 68L562 60Z" fill="#b6e062" stroke="#141a10" stroke-width="2"/>

<!-- right scrollbar -->
<rect x="2838" y="46" width="42" height="1398" fill="#3e474f"/>
<rect x="2840" y="152" width="38" height="1260" fill="url(#ht)"/>
<rect class="btn" x="2840" y="46" width="38" height="38"/><path class="ic" stroke="#d6dadc" stroke-width="2.200" d="M2852 74L2859 65L2866 74"/>
<rect class="btn" x="2840" y="86" width="38" height="66"/>
<rect class="btn" x="2840" y="1412" width="38" height="32"/><path class="ic" stroke="#c8cdcf" stroke-width="2" d="M2851 1424L2859 1434L2867 1424"/>
</svg>
</body></html>
